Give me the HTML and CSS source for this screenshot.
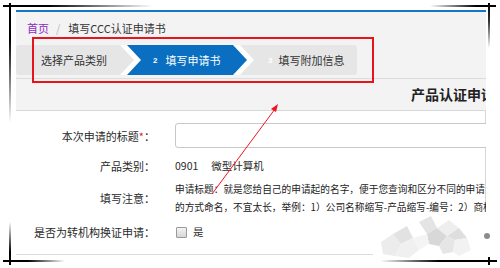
FILE: index.html
```html
<!DOCTYPE html>
<html lang="zh-CN">
<head>
<meta charset="utf-8">
<title>填写CCC认证申请书</title>
<link rel="stylesheet" href="styles.css">
</head>
<body>
<div class="frame">
  <div class="panel">
    <div class="crumb">
      <a class="home">首页</a>
      <span class="sep">/</span>
      <span class="cur">填写CCC认证申请书</span>
    </div>
    <div class="steps-row">
      <div class="steps">
        <div class="step step1">选择产品类别</div>
        <div class="step2">
          <div class="step2-in"><b class="num">2</b>填写申请书</div>
        </div>
        <div class="step step3"><b class="num num3">3</b>填写附加信息</div>
      </div>
    </div>
    <div class="title-bar">产品认证申请书</div>
    <div class="form">
      <div class="row row1">
        <div class="label">本次申请的标题<span class="req">*</span>：</div>
        <div class="value"><div class="input"></div></div>
      </div>
      <div class="row row2">
        <div class="label">产品类别：</div>
        <div class="value val-text"><span class="code">0901</span>微型计算机</div>
      </div>
      <div class="row row3">
        <div class="label">填写注意：</div>
        <div class="value note">
          <div class="line">申请标题：就是您给自己的申请起的名字，便于您查询和区分不同的申请，限定以下</div>
          <div class="line">的方式命名，不宜太长，举例：1）公司名称缩写-产品缩写-编号：2）商标</div>
        </div>
      </div>
      <div class="row row4">
        <div class="label">是否为转机构换证申请：</div>
        <div class="value val-text"><span class="checkbox"></span>是</div>
      </div>
    </div>
  </div>
</div>

<div class="annot-box"></div>
<svg class="arrow" width="500" height="268" viewBox="0 0 500 268">
  <line x1="212" y1="194" x2="275" y2="109" stroke="#f0141e" stroke-width="1"/>
  <polygon points="278,104 271,109 276,112" fill="#f0141e"/>
</svg>

<svg class="watermark" width="120" height="48" viewBox="0 0 120 48">
  <rect x="0" y="0" width="120" height="48" fill="#ffffff"/>
  <polygon points="8,30 20,22 28,32 22,44 10,42" fill="#ececec"/>
  <polygon points="20,22 34,14 40,26 28,32" fill="#e2e2e2"/>
  <polygon points="28,32 40,26 46,38 36,46 22,44" fill="#f0f0f0"/>
  <polygon points="46,10 58,4 64,16 54,22" fill="#e4e4e4"/>
  <polygon points="54,22 64,16 74,24 66,34 56,32" fill="#d8d8d8"/>
  <polygon points="66,34 74,24 82,28 80,40 70,42" fill="#e6e6e6"/>
  <polygon points="64,16 76,8 86,16 74,24" fill="#eeeeee"/>
  <polygon points="74,24 86,16 94,26 82,28" fill="#dedede"/>
  <polygon points="82,28 94,26 98,38 86,44 80,40" fill="#f2f2f2"/>
  <polygon points="40,26 54,22 56,32 46,38" fill="#f4f4f4"/>
  <circle cx="114" cy="24" r="3" fill="#8c8c8c"/>
</svg>

<div class="mark tl-h"></div>
<div class="mark tl-v"></div>
<div class="mark tr-h"></div>
<div class="mark tr-v"></div>
<div class="mark bl-h"></div>
<div class="mark bl-v"></div>
<div class="mark br-h"></div>
<div class="mark br-v"></div>
</body>
</html>
```
FILE: styles.css
```css
html, body {
  margin: 0;
  padding: 0;
}
body {
  width: 500px;
  height: 268px;
  overflow: hidden;
  position: relative;
  background: #ffffff;
  font-family: "Noto Sans CJK SC", "Microsoft YaHei", sans-serif;
  color: #333333;
}
.frame {
  padding: 10px 0 0 16px;
}
.panel {
  width: 470px;
  overflow: hidden;
  border-top: 2px solid #1677c6;
}
.crumb {
  height: 32px;
  background: #f3f3f3;
  display: flex;
  align-items: center;
  padding-left: 11px;
  font-size: 11px;
  line-height: 14px;
  white-space: nowrap;
}
.home {
  color: #8e2bc4;
}
.sep {
  color: #b8b8b8;
  margin: 0 8px 0 7px;
}
.cur {
  color: #333333;
}
.steps-row {
  background: #f3f3f3;
  padding: 1px 0 3px 0;
  border-bottom: 1px solid #dcdcdc;
}
.steps {
  width: 341px;
  height: 30px;
  background: #e6e6e6;
  border-radius: 3px;
  display: flex;
  font-size: 11px;
  white-space: nowrap;
}
.step {
  display: flex;
  align-items: center;
  color: #333333;
}
.step1 {
  width: 104px;
  padding-left: 25px;
  box-sizing: border-box;
}
.step2 {
  width: 134px;
  flex-shrink: 0;
  background: #ffffff;
  padding-left: 7px;
  box-sizing: border-box;
  clip-path: polygon(0 0, 120px 0, 134px 50%, 120px 100%, 0 100%, 14px 50%);
  display: flex;
}
.step2-in {
  width: 120px;
  background: #0b6fc1;
  color: #ffffff;
  clip-path: polygon(0 0, 106px 0, 120px 50%, 106px 100%, 0 100%, 14px 50%);
  display: flex;
  align-items: center;
  padding-left: 26px;
  box-sizing: border-box;
}
.num {
  font-family: "Liberation Sans", Arial, sans-serif;
  font-size: 8px;
  font-weight: bold;
  margin-right: 8px;
}
.num3 {
  color: #ffffff;
  margin-right: 6px;
}
.step3 {
  flex: 1;
  padding-left: 14px;
}
.title-bar {
  height: 31px;
  line-height: 31px;
  background: #f3f3f3;
  border-bottom: 1px solid #d8d8d8;
  padding-left: 395px;
  font-size: 14px;
  font-weight: bold;
  color: #222222;
  white-space: nowrap;
}
.form {
  background: #ffffff;
  border-right: 1px solid #d6d6d6;
  border-bottom: 1px solid #dcdcdc;
  padding: 12px 0 13px 0;
}
.row {
  display: flex;
  align-items: center;
}
.label {
  width: 139px;
  flex-shrink: 0;
  text-align: right;
  font-size: 11px;
  line-height: 18px;
  white-space: nowrap;
  color: #2a2a2a;
}
.req {
  color: #e02020;
}
.value {
  margin-left: 20px;
  white-space: nowrap;
}
.row1 {
  height: 25px;
}
.input {
  width: 340px;
  height: 25px;
  box-sizing: border-box;
  border: 1px solid #c8c8c8;
  border-radius: 3px;
  background: #ffffff;
}
.row2 {
  margin-top: 9px;
}
.val-text {
  font-size: 10.5px;
  line-height: 18px;
  display: flex;
  align-items: center;
  color: #2a2a2a;
}
.code {
  margin-right: 13px;
}
.row3 {
  margin-top: 5px;
}
.note {
  font-size: 9.7px;
  line-height: 18px;
  color: #222222;
}
.row4 {
  margin-top: 7px;
}
.checkbox {
  width: 9px;
  height: 9px;
  border: 1px solid #9a9a9a;
  border-radius: 1px;
  background: linear-gradient(#f4f4f4, #d6d6d6);
  margin-right: 6px;
  margin-left: 1px;
}
.annot-box {
  position: absolute;
  left: 32px;
  top: 37px;
  width: 338px;
  height: 42px;
  border: 2px solid #e8141c;
}
.arrow {
  position: absolute;
  left: 0;
  top: 0;
}
.watermark {
  position: absolute;
  left: 373px;
  top: 212px;
}
.mark {
  position: absolute;
}
.tl-h {
  left: 3px;
  top: 5px;
  width: 150px;
  height: 2px;
  background: linear-gradient(to right, #000 0%, #000 30%, rgba(0,0,0,0) 100%);
}
.tl-v {
  left: 9px;
  top: 3px;
  width: 2px;
  height: 120px;
  background: linear-gradient(to bottom, #000 0%, #000 30%, rgba(0,0,0,0) 100%);
}
.tr-h {
  left: 430px;
  top: 5px;
  width: 66px;
  height: 2px;
  background: linear-gradient(to right, rgba(0,0,0,0) 0%, #000 70%, #000 100%);
}
.tr-v {
  left: 488px;
  top: 3px;
  width: 2px;
  height: 45px;
  background: linear-gradient(to bottom, #000 0%, #333 40%, rgba(0,0,0,0) 100%);
}
.bl-h {
  left: 3px;
  top: 260px;
  width: 62px;
  height: 2px;
  background: linear-gradient(to right, #000 0%, #000 40%, rgba(0,0,0,0) 100%);
}
.bl-v {
  left: 9px;
  top: 222px;
  width: 2px;
  height: 43px;
  background: linear-gradient(to top, #000 0%, #000 30%, rgba(0,0,0,0) 100%);
}
.br-h {
  left: 380px;
  top: 260px;
  width: 117px;
  height: 2px;
  background: linear-gradient(to right, rgba(0,0,0,0) 0%, #000 50%, #000 100%);
}
.br-v {
  left: 488px;
  top: 257px;
  width: 2px;
  height: 8px;
  background: #000;
}
```
